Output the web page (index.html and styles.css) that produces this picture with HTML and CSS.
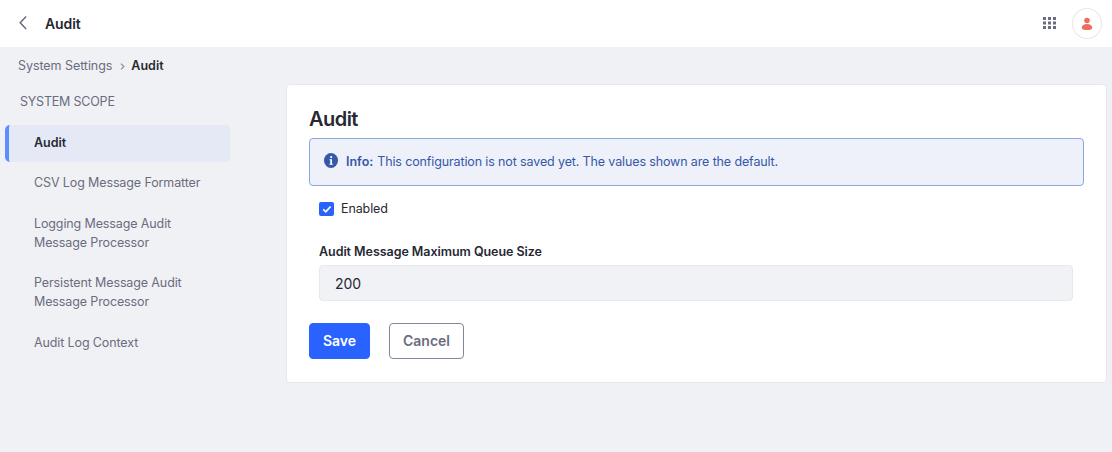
FILE: index.html
```html
<!DOCTYPE html>
<html lang="en">
<head>
<meta charset="utf-8">
<title>Audit</title>
<link rel="stylesheet" href="styles.css">
</head>
<body>
<header class="topbar">
  <a class="back" aria-label="Back"><svg width="10" height="16" viewBox="0 0 10 16"><path d="M8.100 1.400 2.200 7.700l5.900 6.300" fill="none" stroke="#6b6c7e" stroke-width="1.500"/></svg></a>
  <h1 class="topbar-title">Audit</h1>
  <svg class="apps" width="13" height="12" viewBox="0 0 13 12" fill="#6b6c7e"><path d="M0 0h3v3H0zM5 0h3v3H5zM10 0h3v3h-3zM0 4.500h3v3H0zM5 4.500h3v3H5zM10 4.500h3v3h-3zM0 9h3v3H0zM5 9h3v3H5zM10 9h3v3h-3z"/></svg>
  <span class="avatar"><svg width="12" height="14" viewBox="0 0 12 14" fill="#ed6f5f"><circle cx="6" cy="3.500" r="2.800"/><path d="M.8 10.400C.8 8.100 3 6.900 6 6.900s5.200 1.200 5.200 3.500c0 1.800-1.900 2.600-5.200 2.600S.8 12.200.8 10.400z"/></svg></span>
</header>
<nav class="breadcrumb">
  <a class="crumb">System Settings</a>
  <svg width="5" height="7" viewBox="0 0 5 7"><path d="M1 .6 3.900 3.500 1 6.400" fill="none" stroke="#85869a" stroke-width="1.100"/></svg>
  <span class="current">Audit</span>
</nav>
<div class="layout">
  <aside class="sidebar">
    <div class="scope">SYSTEM SCOPE</div>
    <a class="item active">Audit</a>
    <a class="item">CSV Log Message Formatter</a>
    <a class="item">Logging Message Audit<br>Message Processor</a>
    <a class="item">Persistent Message Audit<br>Message Processor</a>
    <a class="item last">Audit Log Context</a>
  </aside>
  <main class="sheet">
    <h2 class="sheet-title">Audit</h2>
    <div class="alert">
      <svg width="14" height="15" viewBox="0 0 14 15"><ellipse cx="7" cy="7.500" rx="7" ry="7.400" fill="#3558a8"/><circle cx="7.200" cy="4.100" r="1.100" fill="#fff"/><path d="M5.500 6.200H8v4.500h.8v1H5.400v-1h.9V7.200h-.8z" fill="#fff"/></svg>
      <strong>Info:</strong><span class="alert-text">This configuration is not saved yet. The values shown are the default.</span>
    </div>
    <label class="check">
      <span class="box"><svg width="15" height="14" viewBox="0 0 15 14"><path d="m4.300 7.400 2.500 2.400 4.800-5.300" fill="none" stroke="#fff" stroke-width="1.800"/></svg></span>
      <span class="check-text">Enabled</span>
    </label>
    <div class="field">
      <label class="field-label" for="queue">Audit Message Maximum Queue Size</label>
      <input class="input" id="queue" type="text" value="200">
    </div>
    <div class="actions">
      <button class="btn primary">Save</button>
      <button class="btn secondary">Cancel</button>
    </div>
  </main>
</div>
</body>
</html>
```
FILE: styles.css
```css
* { box-sizing: border-box; }
body {
  margin: 0;
  min-height: 452px;
  background: #f0f1f5;
  color: #272833;
  font-family: Inter, "Liberation Sans", sans-serif;
  font-size: 12.5px;
}
svg { display: block; flex: none; }
.topbar {
  display: flex;
  align-items: center;
  height: 47px;
  padding: 0 10px 0 18px;
  background: #fff;
}
.back { width: 27px; padding-bottom: 2px; }
.topbar-title { margin: 0; font-size: 14px; font-weight: 600; line-height: 20px; letter-spacing: -0.1px; }
.apps { margin: 0 16px 1px auto; }
.avatar {
  display: flex;
  align-items: center;
  justify-content: center;
  width: 30px;
  height: 31px;
  border: 1px solid #e7e7ed;
  border-radius: 50%;
}
.breadcrumb {
  display: flex;
  align-items: center;
  height: 37px;
  padding: 0 18px;
  color: #6b6c7e;
}
.crumb { letter-spacing: -0.06px; }
.breadcrumb svg { margin: 2px 6px 0 8px; }
.current { color: #272833; font-weight: 600; }
.layout { display: flex; align-items: flex-start; }
.sidebar { width: 286px; padding: 8px 56px 0 5px; color: #6b6c7e; letter-spacing: -0.12px; }
.scope { height: 33px; padding-left: 15px; line-height: 19px; letter-spacing: -0.2px; }
.item {
  display: block;
  margin-bottom: 3.300px;
  padding: 8px 12px 10px 29px;
  line-height: 19px;
}
.item.last { padding-top: 9px; }
.item.active {
  border-left: 4px solid #5f8dff;
  border-radius: 5px 4px 4px 5px;
  padding-left: 25px;
  background: #e5e9f5;
  color: #272833;
  font-weight: 600;
  letter-spacing: 0;
}
.sheet {
  width: 821px;
  height: 299px;
  padding: 20px 22px;
  border: 1px solid #e7e7ed;
  border-radius: 4px;
  background: #fff;
}
.sheet-title { margin: 0; height: 33px; font-size: 20px; font-weight: 600; line-height: 28px; letter-spacing: -0.55px; }
.alert {
  display: flex;
  align-items: center;
  height: 48px;
  padding: 0 14px 2px;
  border: 1px solid #89a7e0;
  border-radius: 4px;
  background: #eef1fa;
  color: #3558a8;
}
.alert svg { margin: 0 8px 1px 0; }
.alert strong { margin-right: 4px; font-weight: 600; }
.alert-text { letter-spacing: -0.13px; }
.check { display: flex; align-items: center; gap: 7px; height: 46px; padding-left: 10px; }
.check-text { padding-bottom: 2px; letter-spacing: -0.1px; }
.box { width: 15px; height: 14px; border-radius: 2px; background: #2962ff; }
.field { padding: 10px 11px 0 10px; }
.field-label { display: block; height: 23px; font-weight: 600; line-height: 19px; letter-spacing: -0.05px; }
.input {
  display: block;
  width: 100%;
  height: 36px;
  padding: 0 15px;
  border: 1px solid #e7e7ed;
  border-radius: 4px;
  background: #f1f2f5;
  color: #272833;
  font: 14px Inter, sans-serif;
}
.actions { display: flex; gap: 19px; margin-top: 22px; }
.btn {
  height: 36px;
  padding: 0 0 2px;
  border: 1px solid #2962ff;
  border-radius: 4px;
  font: 600 14px Inter, sans-serif;
}
.primary { width: 61px; background: #2962ff; color: #fff; }
.secondary { width: 75px; background: #fff; border-color: #85869a; color: #6b6c7e; }
```
